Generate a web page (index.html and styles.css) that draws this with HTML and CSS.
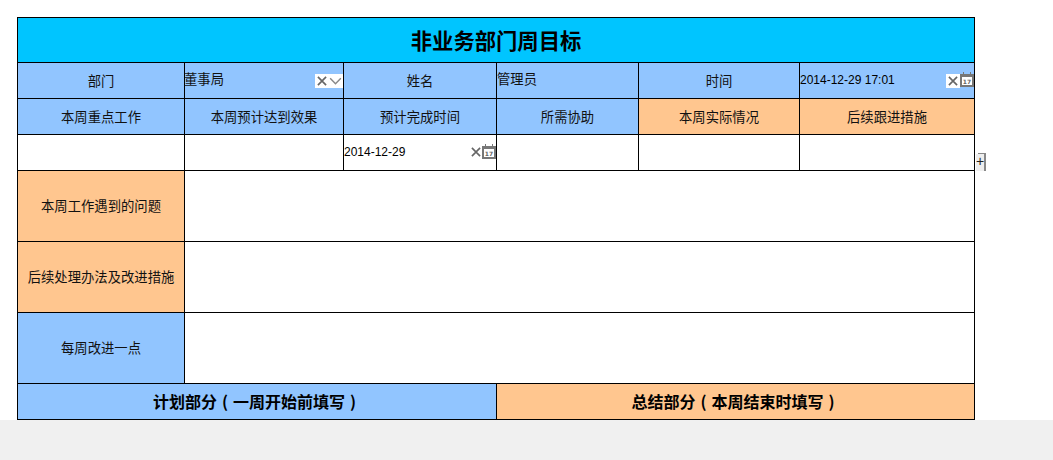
FILE: index.html
```html
<!DOCTYPE html>
<html lang="zh">
<head>
<meta charset="utf-8">
<title>非业务部门周目标</title>
<link rel="stylesheet" href="styles.css">
</head>
<body>
<main class="sheet">
  <div class="sheet-wrap">
    <table class="grid">
      <colgroup>
        <col class="c1"><col class="c2"><col class="c3"><col class="c4"><col class="c5"><col class="c6">
      </colgroup>
      <tr class="r-title"><th colspan="6" class="title">非业务部门周目标</th></tr>
      <tr class="r-std">
        <td class="blue label">部门</td>
        <td class="blue field">
          <div class="field-row combo"><span class="value">董事局</span>
            <span class="tools white">
              <svg class="ico-x" viewBox="0 0 11 11"><path d="M1 1l9 9M10 1l-9 9"/></svg>
              <svg class="ico-chev" viewBox="0 0 14 9"><path d="M1 1.5l6 6 6-6"/></svg>
            </span>
          </div>
        </td>
        <td class="blue label">姓名</td>
        <td class="blue field"><div class="field-row combo"><span class="value flush">管理员</span></div></td>
        <td class="blue label">时间</td>
        <td class="blue field">
          <div class="field-row combo"><span class="value date">2014-12-29 17:01</span>
            <span class="tools">
              <span class="white icon-x-box"><svg class="ico-x" viewBox="0 0 11 11"><path d="M1 1l9 9M10 1l-9 9"/></svg></span>
              <svg class="ico-cal" viewBox="0 0 14 15"><path class="cal-frame" d="M0 2h3V0h1v2h6V0h1v2h3v13H0z"/><rect class="cal-page" x="2" y="5" width="10" height="8"/><text class="cal-num" x="7" y="12">17</text></svg>
            </span>
          </div>
        </td>
      </tr>
      <tr class="r-std">
        <td class="blue label">本周重点工作</td>
        <td class="blue label">本周预计达到效果</td>
        <td class="blue label">预计完成时间</td>
        <td class="blue label">所需协助</td>
        <td class="orange label">本周实际情况</td>
        <td class="orange label">后续跟进措施</td>
      </tr>
      <tr class="r-std">
        <td class="plain"></td>
        <td class="plain"></td>
        <td class="plain field">
          <div class="field-row row-date"><span class="value date">2014-12-29</span>
            <span class="tools">
              <svg class="ico-x" viewBox="0 0 11 11"><path d="M1 1l9 9M10 1l-9 9"/></svg>
              <svg class="ico-cal" viewBox="0 0 14 15"><path class="cal-frame" d="M0 2h3V0h1v2h6V0h1v2h3v13H0z"/><rect class="cal-page" x="2" y="5" width="10" height="8"/><text class="cal-num" x="7" y="12">17</text></svg>
            </span>
          </div>
        </td>
        <td class="plain"></td>
        <td class="plain"></td>
        <td class="plain"></td>
      </tr>
      <tr class="r-tall"><td class="orange label">本周工作遇到的问题</td><td colspan="5" class="plain"></td></tr>
      <tr class="r-tall"><td class="orange label">后续处理办法及改进措施</td><td colspan="5" class="plain"></td></tr>
      <tr class="r-tall"><td class="blue label">每周改进一点</td><td colspan="5" class="plain"></td></tr>
      <tr class="r-std">
        <td colspan="3" class="blue section">计划部分 ( 一周开始前填写 )</td>
        <td colspan="3" class="orange section">总结部分 ( 本周结束时填写 )</td>
      </tr>
    </table>
    <div class="add-handle">+</div>
  </div>
</main>
<footer class="foot"></footer>
</body>
</html>
```
FILE: styles.css
```css
* { box-sizing: border-box; }
html, body { margin: 0; padding: 0; background: #fff; }
body {
  font-family: "Noto Sans CJK SC", "Noto Sans", sans-serif;
  font-size: 13.33px;
  color: #111;
  overflow: hidden;
}
.sheet { height: 420px; padding: 17px 0 0 17px; }
.sheet-wrap { position: relative; width: 958px; }
.grid {
  border-collapse: collapse;
  table-layout: fixed;
  width: 957px;
}
.grid td, .grid th { border: 1px solid #000; padding: 0 0 2px; text-align: center; }
.grid .field { padding: 0; text-align: left; }
.grid .label { padding-bottom: 0; line-height: 18px; }
.c1 { width: 167px; }
.c2 { width: 159px; }
.c3 { width: 153px; }
.c4 { width: 142px; }
.c5 { width: 161px; }
.c6 { width: 175px; }
.r-title { height: 45px; }
.r-std { height: 36px; }
.r-tall { height: 71px; }
.title { background: #00c5ff; color: #000; font-size: 21.33px; font-weight: 700; }
.blue { background: #91c5ff; }
.orange { background: #ffc68f; }
.plain { background: #fff; }
.grid .section { font-size: 16px; font-weight: 700; color: #000; word-spacing: 1.4px; padding-right: 5px; }
.field-row { display: flex; align-items: center; justify-content: space-between; height: 35px; }
.combo { padding-bottom: 3px; }
.row-date { padding-bottom: 2px; }
.value { line-height: 18px; white-space: nowrap; margin-left: -1px; }
.value.flush { margin-left: 0; }
.date { font-family: "Liberation Sans", Arial, sans-serif; font-size: 12px; color: #000; margin-left: 0; }
.combo .date { margin-top: 2px; }
.tools { display: flex; align-items: center; height: 15px; }
.combo .tools { margin-top: 3px; }
.white { background: #fff; }
.white.tools { width: 28px; height: 14px; padding-left: 2px; gap: 2px; }
.icon-x-box { display: flex; align-items: center; justify-content: center; width: 14px; height: 14px; }
.row-date .tools { gap: 1px; }
.ico-x { width: 10px; height: 10px; fill: none; stroke: #666; stroke-width: 1.8; }
.ico-chev { width: 13px; height: 8px; fill: none; stroke: #888; stroke-width: 1.6; }
.ico-cal { width: 14px; height: 15px; flex: none; }
.combo .ico-cal { margin-bottom: 2px; }
.cal-frame { fill: #777; }
.cal-page { fill: #fff; }
.cal-num { font-family: "DejaVu Sans", sans-serif; font-size: 6px; font-weight: 700; fill: #666; text-anchor: middle; }
.add-handle {
  position: absolute;
  left: 959px;
  top: 137px;
  width: 8px;
  height: 17px;
  background: #eee;
  box-shadow: 2px -1px 0 #888, 2px 0 0 #888;
  font-family: "Liberation Sans", Arial, sans-serif;
  font-size: 14px;
  line-height: 14px;
  text-align: center;
  color: #222;
}
.foot { height: 40px; background: #f0f0f0; }
```
